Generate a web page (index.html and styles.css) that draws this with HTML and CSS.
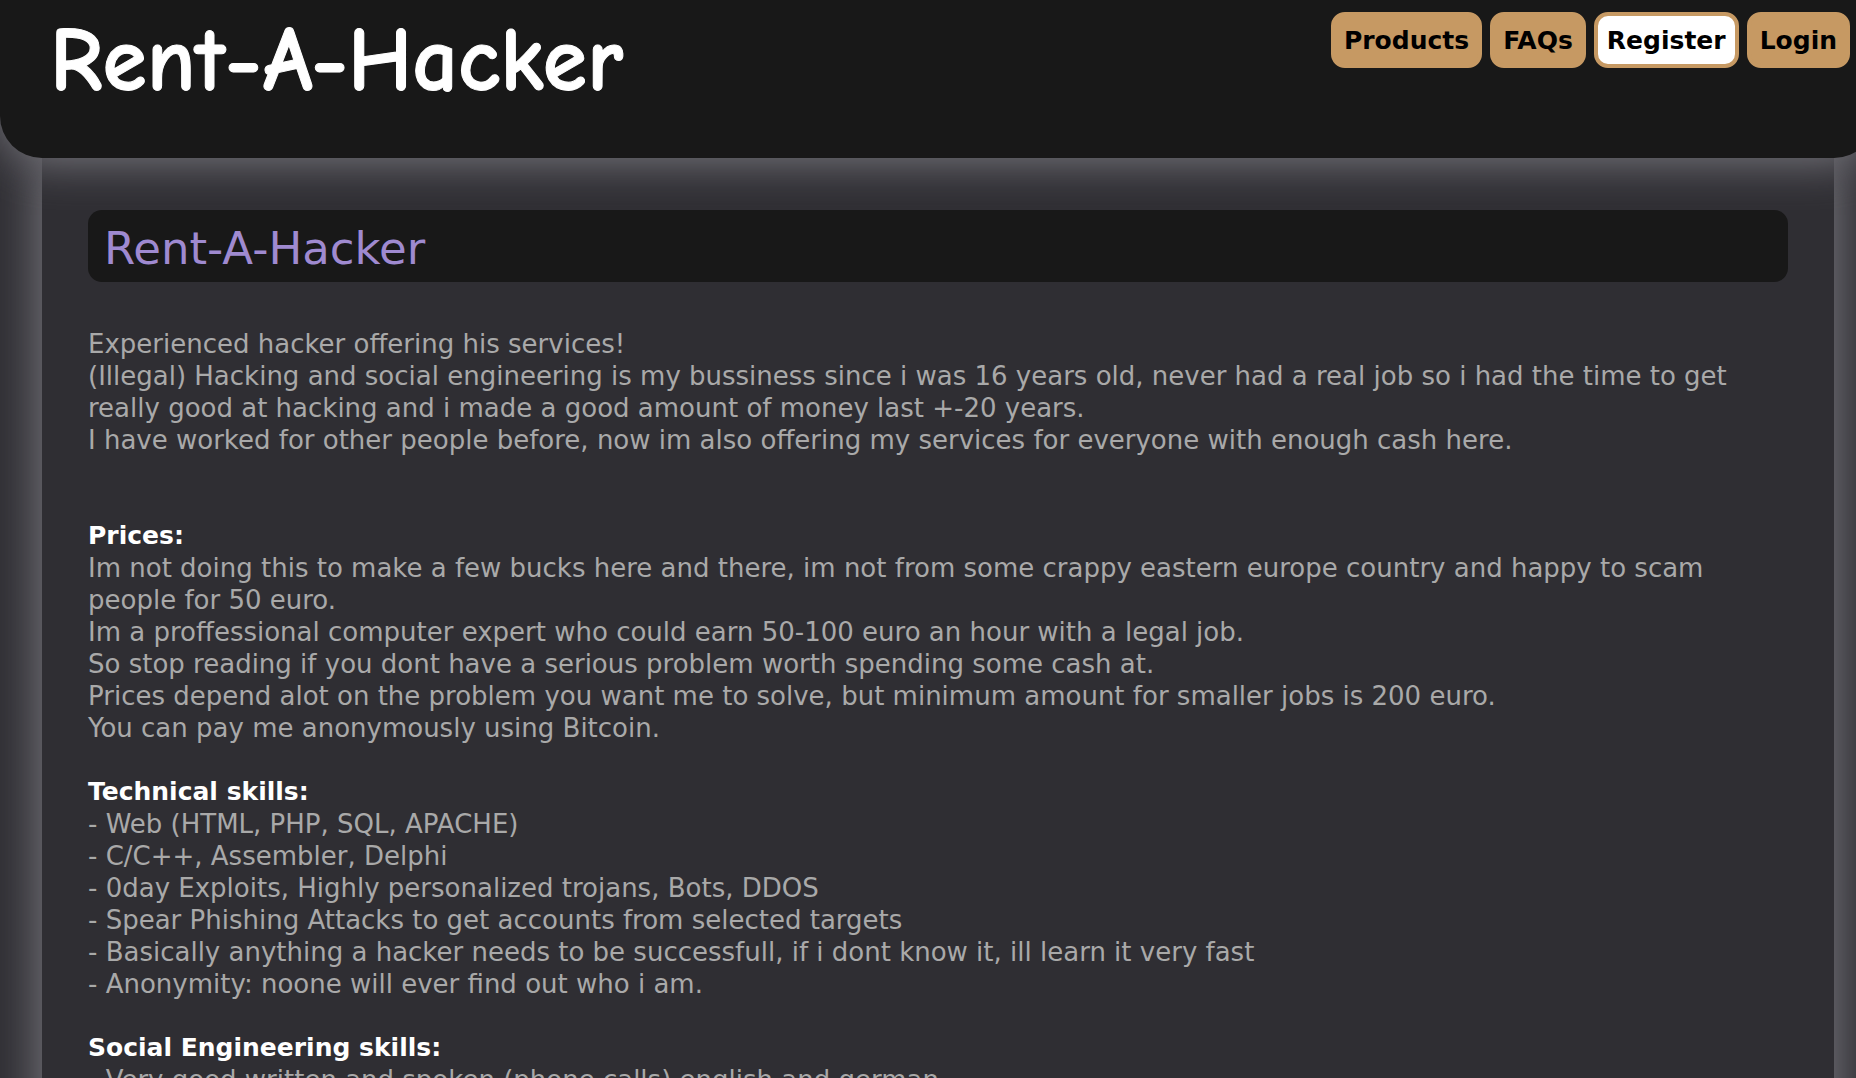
FILE: index.html
```
<!DOCTYPE html>
<html lang="en">
<head>
<meta charset="utf-8">
<title>Rent-A-Hacker</title>
<link rel="stylesheet" href="styles.css">
</head>
<body>
<div class="page">
  <header class="header">
    <div class="logo">Rent-A-Hacker</div>
    <nav class="nav">
      <a href="#products">Products</a>
      <a href="#faqs">FAQs</a>
      <a href="#register" class="active">Register</a>
      <a href="#login">Login</a>
    </nav>
  </header>
  <main class="content">
    <h1 class="title">Rent-A-Hacker</h1>
    <section class="block intro">
      <p>Experienced hacker offering his services!</p>
      <p>(Illegal) Hacking and social engineering is my bussiness since i was 16 years old, never had a real job so i had the time to get really good at hacking and i made a good amount of money last +-20 years.</p>
      <p>I have worked for other people before, now im also offering my services for everyone with enough cash here.</p>
    </section>
    <section class="block">
      <h2>Prices:</h2>
      <p>Im not doing this to make a few bucks here and there, im not from some crappy eastern europe country and happy to scam people for 50 euro.</p>
      <p>Im a proffessional computer expert who could earn 50-100 euro an hour with a legal job.</p>
      <p>So stop reading if you dont have a serious problem worth spending some cash at.</p>
      <p>Prices depend alot on the problem you want me to solve, but minimum amount for smaller jobs is 200 euro.</p>
      <p>You can pay me anonymously using Bitcoin.</p>
    </section>
    <section class="block">
      <h2>Technical skills:</h2>
      <p>- Web (HTML, PHP, SQL, APACHE)</p>
      <p>- C/C++, Assembler, Delphi</p>
      <p>- 0day Exploits, Highly personalized trojans, Bots, DDOS</p>
      <p>- Spear Phishing Attacks to get accounts from selected targets</p>
      <p>- Basically anything a hacker needs to be successfull, if i dont know it, ill learn it very fast</p>
      <p>- Anonymity: noone will ever find out who i am.</p>
    </section>
    <section class="block">
      <h2>Social Engineering skills:</h2>
      <p>- Very good written and spoken (phone calls) english and german.</p>
    </section>
  </main>
</div>
</body>
</html>
```
FILE: styles.css
```
* { box-sizing: border-box; }

body {
  margin: 0;
  height: 100vh;
  overflow: hidden;
  background: #2f2e33;
  color: #a9a9a9;
  font-family: Verdana, "DejaVu Sans", sans-serif;
  font-size: 26px;
  line-height: 32px;
}

/* The page runs slightly past the right edge of the window. */
.page { width: calc(100% + 20px); }

.header {
  position: relative;
  z-index: 1;
  display: flex;
  justify-content: space-between;
  align-items: flex-start;
  height: 158px;
  padding: 12px 26px 0 50px;
  background: #181818;
  border-radius: 0 0 42px 42px;
  box-shadow: 0 0 50px #84838a;
}

.logo {
  color: #fff;
  font-family: "Comic Sans MS", "Comic Neue", Lato, sans-serif;
  font-size: 90px;
  font-weight: bold;
  line-height: 98px;
  -webkit-text-stroke: 1px #fff;
}

.nav { display: flex; gap: 8px; }

.nav a {
  padding: 9px 9px 7px;
  border: 4px solid #c69963;
  border-radius: 14px;
  background: #c69963;
  color: #000;
  font-size: 25px;
  font-weight: bold;
  text-decoration: none;
}

.nav .active { background: #fff; }

.content {
  min-height: 100vh;
  margin: 0 42px;
  padding: 52px 46px 0;
  background: #2f2e33;
  box-shadow: 0 0 50px #84838a;
}

.title {
  margin: 0 0 46px;
  padding: 11px 16px 5px;
  border-radius: 14px;
  background: #181818;
  color: #9f8ad0;
  font-size: 45px;
  font-weight: normal;
  line-height: 56px;
}

.block { margin-bottom: 32px; }
.intro { margin-bottom: 64px; }
.block p { margin: 0; }

.block h2 {
  margin: 0;
  color: #fff;
  font-size: 25px;
  line-height: 32px;
}
```
